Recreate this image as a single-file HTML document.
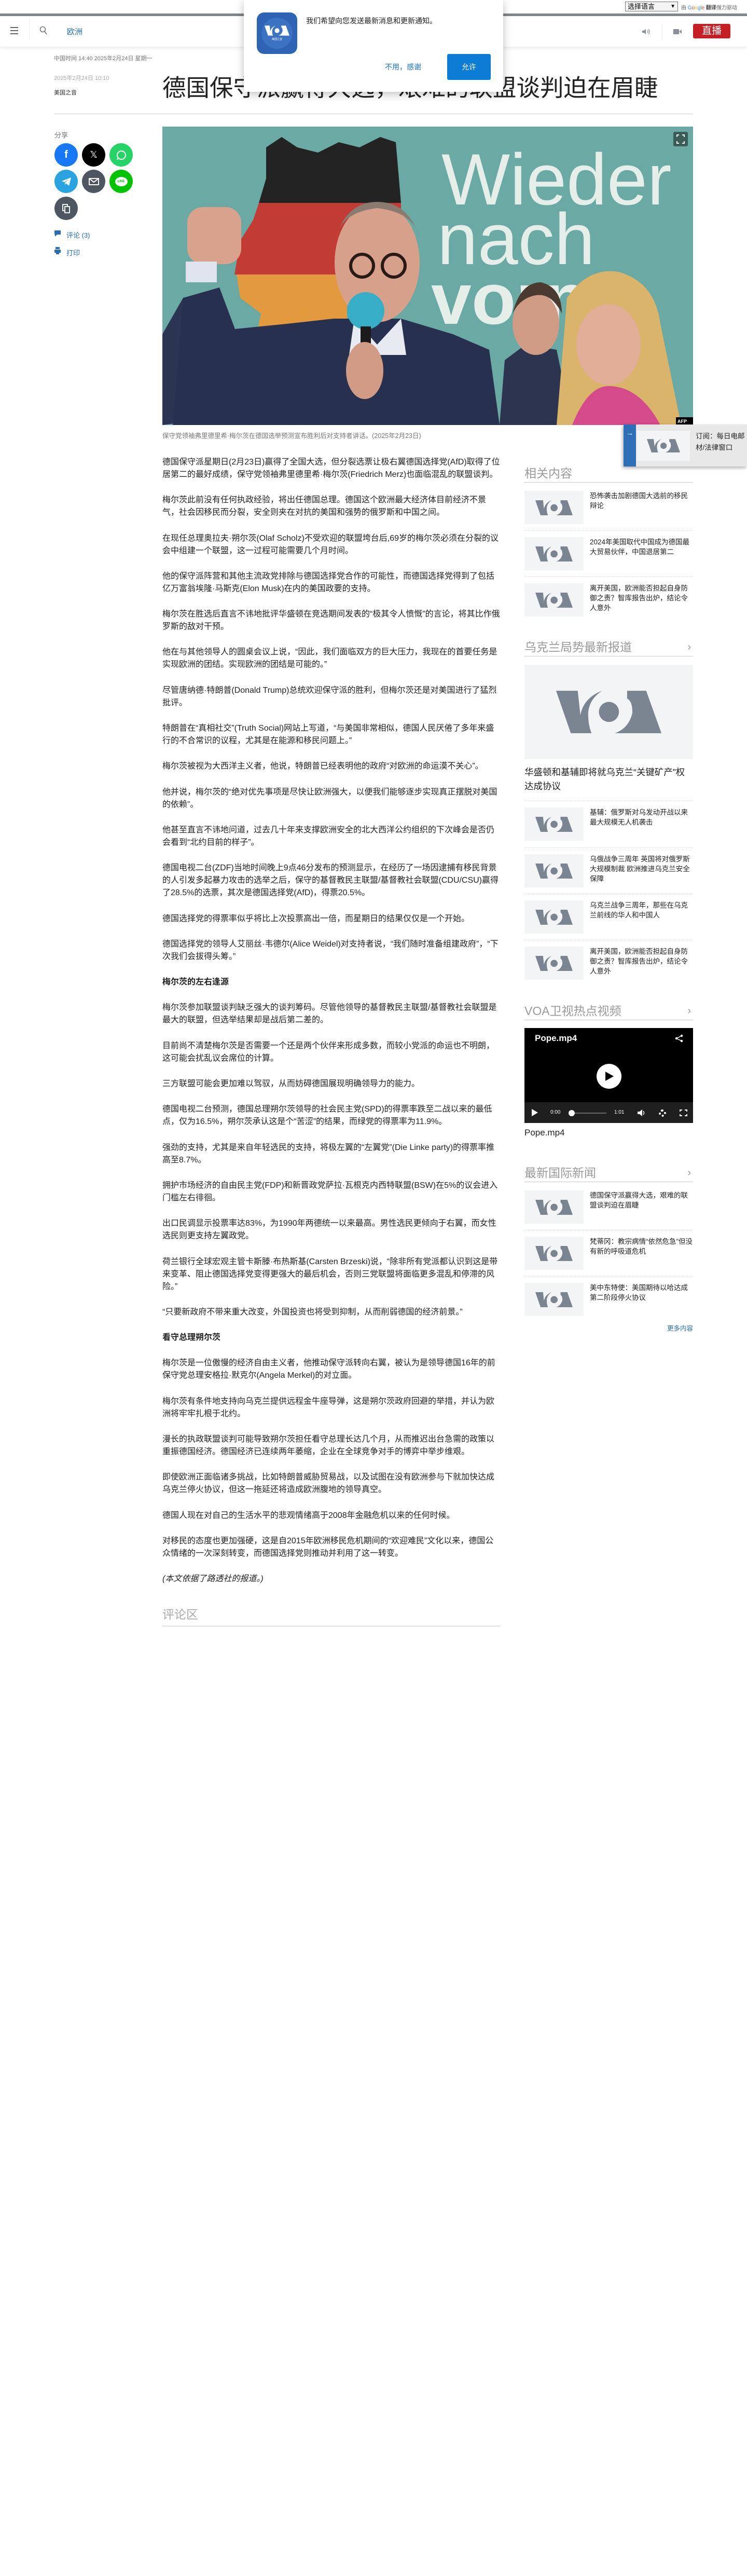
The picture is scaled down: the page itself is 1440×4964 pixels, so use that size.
<!DOCTYPE html>
<html lang="zh-CN"><head><meta charset="utf-8">
<style>
*{margin:0;padding:0;box-sizing:border-box}
html,body{width:1440px;height:4964px;background:#fff;overflow:hidden}
body{font-family:"Liberation Sans","Noto Sans CJK SC",sans-serif;color:#222;position:relative}
.abs{position:absolute}
.body{position:absolute;left:313px;top:879px;width:652px;font-size:16px;line-height:24px;color:#222}
.body p{margin:0 0 25.3px 0}
.body h3{font-size:16px;font-weight:bold;margin:0 0 25.3px 0;line-height:24px}
.sh{position:absolute;left:1011px;width:325px;font-size:23px;color:#9a9a9a;border-bottom:1px solid #ccc;padding-bottom:2px;line-height:30px}
.sh .ar{position:absolute;right:4px;top:0;font-size:20px;color:#999}
.item{position:absolute;left:1011px;width:325px;height:66px}
.item .th{position:absolute;left:0;top:0;width:114px;height:64px;background:#f2f4f6;display:flex;align-items:center;justify-content:center}
.item .tx{position:absolute;left:126px;top:0;width:199px;font-size:13.5px;line-height:19px;color:#222}
.sep{position:absolute;left:1011px;width:325px;border-top:1px dotted #ddd}
.circ{position:absolute;width:45px;height:45px;border-radius:50%;display:flex;align-items:center;justify-content:center}
</style></head><body>

<div class="abs" style="left:1205px;top:3px;width:102px;height:19px;border:1px solid #777;background:#f4f4f4;font-size:13px;line-height:17px;padding-left:4px;color:#000">选择语言<span style="position:absolute;right:4px;top:0;font-size:10px">&#9660;</span></div>
<div class="abs" style="left:1313px;top:6px;font-size:10px;color:#666;white-space:nowrap">由 <span style="color:#4285f4">G</span><span style="color:#ea4335">o</span><span style="color:#fbbc05">o</span><span style="color:#4285f4">g</span><span style="color:#34a853">l</span><span style="color:#ea4335">e</span> <b style="color:#444">翻译</b>强力驱动</div>
<div class="abs" style="left:0;top:26px;width:1440px;height:5px;background:#80868b"></div>
<div class="abs" style="left:0;top:31px;width:1440px;height:59px;background:#fff;box-shadow:0 3px 6px rgba(0,0,0,.08)"></div>
<div class="abs" style="left:20px;top:52px;width:15px;height:2px;background:#666;box-shadow:0 6px 0 #666,0 12px 0 #666"></div>
<div class="abs" style="left:56px;top:36px;width:1px;height:40px;background:#eee"></div>
<svg class="abs" style="left:76px;top:50px" width="16" height="18" viewBox="0 0 16 18"><circle cx="6.5" cy="6.5" r="5" fill="none" stroke="#777" stroke-width="1.6"/><line x1="10" y1="10.5" x2="14" y2="16" stroke="#777" stroke-width="1.8"/></svg>
<div class="abs" style="left:129px;top:50px;font-size:15px;color:#2a6db0">欧洲</div>
<svg class="abs" style="left:1237px;top:54px" width="17" height="14" viewBox="0 0 17 14"><path d="M1 5h3l4-3v10l-4-3H1z" fill="#8a9099"/><path d="M11 4q2 3 0 6M13 2q4 5 0 10" fill="none" stroke="#8a9099" stroke-width="1.2"/></svg>
<div class="abs" style="left:1276px;top:46px;width:1px;height:30px;background:#eee"></div>
<svg class="abs" style="left:1298px;top:55px" width="16" height="12" viewBox="0 0 16 12"><rect x="0" y="1" width="11" height="10" fill="#8a9099"/><path d="M11 6l5-4v8z" fill="#8a9099"/></svg>
<div class="abs" style="left:1336px;top:46px;width:72px;height:28px;background:#c41f24;border-radius:3px;color:#fff;font-size:19px;text-align:center;line-height:28px">直播</div>

<div class="abs" style="left:104px;top:104px;font-size:11px;color:#777">中国时间 14:40 2025年2月24日 星期一</div>
<div class="abs" style="left:104px;top:142px;font-size:11px;color:#aaa">2025年2月24日 10:10</div>
<div class="abs" style="left:104px;top:170px;font-size:11px;color:#333">美国之音</div>
<div class="abs" style="left:313px;top:140px;font-size:45.5px;line-height:60px;color:#222;white-space:nowrap">德国保守派赢得大选，艰难的联盟谈判迫在眉睫</div>
<div class="abs" style="left:104px;top:219px;width:1232px;height:1px;background:#ccc"></div>

<div class="abs" style="left:105px;top:250px;font-size:13px;color:#777">分享</div>
<div class="circ" style="left:105px;top:276px;background:#1877f2"><span style="color:#fff;font-weight:bold;font-size:20px">f</span></div>
<div class="circ" style="left:158px;top:276px;background:#000"><span style="color:#fff;font-size:18px">𝕏</span></div>
<div class="circ" style="left:211px;top:276px;background:#25d366"><svg width="22" height="22" viewBox="0 0 22 22"><circle cx="11" cy="11" r="8" fill="none" stroke="#fff" stroke-width="2"/><path d="M3 20l2-5" stroke="#fff" stroke-width="2"/></svg></div>
<div class="circ" style="left:105px;top:327px;background:#2aa3e0"><svg width="20" height="18" viewBox="0 0 20 18"><path d="M1 8L19 1 15 17 9 12 7 16 7 11 15 4 6 10z" fill="#fff"/></svg></div>
<div class="circ" style="left:158px;top:327px;background:#4d5661"><svg width="20" height="14" viewBox="0 0 20 14"><rect x="1" y="1" width="18" height="12" fill="none" stroke="#fff" stroke-width="2"/><path d="M1 1l9 7 9-7" fill="none" stroke="#fff" stroke-width="2"/></svg></div>
<div class="circ" style="left:211px;top:327px;background:#00c300"><div style="width:24px;height:18px;background:#fff;border-radius:50%;font-size:6px;color:#00c300;text-align:center;line-height:18px;font-weight:bold">LINE</div></div>
<div class="circ" style="left:105px;top:379px;background:#4d5661"><svg width="16" height="18" viewBox="0 0 16 18"><rect x="1" y="1" width="9" height="12" fill="none" stroke="#fff" stroke-width="1.8"/><rect x="5" y="5" width="9" height="12" fill="#4d5661" stroke="#fff" stroke-width="1.8"/></svg></div>
<svg class="abs" style="left:105px;top:444px" width="12" height="13" viewBox="0 0 12 13"><path d="M0 0h12v8H5l-4 4V8H0z" fill="#2a6db0"/></svg>
<div class="abs" style="left:128px;top:443px;font-size:13px;color:#2a6db0">评论 (3)</div>
<svg class="abs" style="left:105px;top:476px" width="12" height="14" viewBox="0 0 12 14"><rect x="2" y="0" width="8" height="4" fill="#2a6db0"/><rect x="0" y="5" width="12" height="6" fill="#2a6db0"/><rect x="3" y="9" width="6" height="5" fill="#2a6db0"/></svg>
<div class="abs" style="left:128px;top:477px;font-size:13px;color:#2a6db0">打印</div>

<svg class="abs" style="left:313px;top:244px" width="1023" height="575" viewBox="0 0 1023 575">
<rect width="1023" height="575" fill="#6ba9a4"/>
<path d="M200 40 L230 20 L260 40 L300 50 L340 30 L380 40 L420 20 L450 30 L460 147 L186 147 L200 100 Z" fill="#232323"/>
<path d="M186 147 H460 V285 H139 L150 220 L175 180 Z" fill="#c23b35"/>
<path d="M143 285 H356 V411 H180 L190 360 L150 330 Z" fill="#e39a3e"/>
<text x="538" y="150" font-family="Liberation Sans" font-size="140" fill="#e6eeea">Wieder</text>
<text x="530" y="265" font-family="Liberation Sans" font-size="140" fill="#e6eeea">nach</text>
<text x="518" y="380" font-family="Liberation Sans" font-size="140" fill="#e6eeea" font-weight="bold">vorn</text>
<path d="M0 400 L40 330 L100 320 L120 560 L0 575Z" fill="#2b3552"/>
<path d="M20 575 L40 330 L110 310 L140 390 L240 380 L330 370 L460 370 L560 400 L630 430 L650 575Z" fill="#27314f"/>
<rect x="48" y="155" width="104" height="110" rx="30" fill="#d9a28c"/>
<rect x="45" y="260" width="60" height="40" fill="#dfe4ee"/>
<ellipse cx="414" cy="262" rx="82" ry="115" fill="#d6a08a"/>
<path d="M334 215 Q355 145 414 145 Q475 145 496 215 Q485 165 414 157 Q345 165 334 215Z" fill="#8a7a70"/>
<circle cx="385" cy="268" r="22" fill="none" stroke="#2a1a16" stroke-width="6"/>
<circle cx="446" cy="268" r="22" fill="none" stroke="#2a1a16" stroke-width="6"/>
<path d="M370 370 L414 420 L460 370 L470 440 L360 440Z" fill="#e8eaf2"/>
<circle cx="392" cy="355" r="36" fill="#38aec6"/>
<rect x="382" y="385" width="20" height="130" fill="#1b1b1b"/>
<ellipse cx="390" cy="470" rx="36" ry="55" fill="#d19b86"/>
<path d="M650 575 L660 450 L700 420 L760 430 L790 575Z" fill="#2d3450"/>
<ellipse cx="720" cy="380" rx="45" ry="60" fill="#cf9b84"/>
<path d="M675 360 Q690 300 730 300 Q770 310 770 360 Q750 320 720 325 Q690 330 675 360Z" fill="#4a3a30"/>
<path d="M760 575 L780 330 Q820 270 880 280 Q950 300 960 380 L1000 575Z" fill="#d9b46a"/>
<ellipse cx="860" cy="420" rx="62" ry="78" fill="#e0ad96"/>
<path d="M790 575 Q820 500 860 500 Q920 500 960 575Z" fill="#d44a8a"/>
<rect x="990" y="560" width="33" height="15" fill="#000"/>
<text x="993" y="571" font-family="Liberation Sans" font-size="9" font-weight="bold" fill="#fff">AFP</text>
<rect x="985" y="10" width="28" height="28" rx="3" fill="rgba(0,0,0,.45)"/>
<path d="M992 20v-4h4M1006 20v-4h-4M992 28v4h4M1006 28v4h-4" stroke="#fff" stroke-width="2" fill="none"/>
</svg>
<div class="abs" style="left:313px;top:829px;font-size:12.5px;color:#777;white-space:nowrap">保守党领袖弗里德里希·梅尔茨在德国选举预测宣布胜利后对支持者讲话。(2025年2月23日)</div>

<div class="body">
<p>德国保守派星期日(2月23日)赢得了全国大选，但分裂选票让极右翼德国选择党(AfD)取得了位居第二的最好成绩，保守党领袖弗里德里希·梅尔茨(Friedrich Merz)也面临混乱的联盟谈判。</p>
<p>梅尔茨此前没有任何执政经验，将出任德国总理。德国这个欧洲最大经济体目前经济不景气，社会因移民而分裂，安全则夹在对抗的美国和强势的俄罗斯和中国之间。</p>
<p>在现任总理奥拉夫·朔尔茨(Olaf Scholz)不受欢迎的联盟垮台后,69岁的梅尔茨必须在分裂的议会中组建一个联盟，这一过程可能需要几个月时间。</p>
<p>他的保守派阵营和其他主流政党排除与德国选择党合作的可能性，而德国选择党得到了包括亿万富翁埃隆·马斯克(Elon Musk)在内的美国政要的支持。</p>
<p>梅尔茨在胜选后直言不讳地批评华盛顿在竞选期间发表的“极其令人愤慨”的言论，将其比作俄罗斯的敌对干预。</p>
<p>他在与其他领导人的圆桌会议上说，“因此，我们面临双方的巨大压力，我现在的首要任务是实现欧洲的团结。实现欧洲的团结是可能的。”</p>
<p>尽管唐纳德·特朗普(Donald Trump)总统欢迎保守派的胜利，但梅尔茨还是对美国进行了猛烈批评。</p>
<p>特朗普在“真相社交”(Truth Social)网站上写道，“与美国非常相似，德国人民厌倦了多年来盛行的不合常识的议程，尤其是在能源和移民问题上。”</p>
<p>梅尔茨被视为大西洋主义者，他说，特朗普已经表明他的政府“对欧洲的命运漠不关心”。</p>
<p>他并说，梅尔茨的“绝对优先事项是尽快让欧洲强大，以便我们能够逐步实现真正摆脱对美国的依赖”。</p>
<p>他甚至直言不讳地问道，过去几十年来支撑欧洲安全的北大西洋公约组织的下次峰会是否仍会看到“北约目前的样子”。</p>
<p>德国电视二台(ZDF)当地时间晚上9点46分发布的预测显示，在经历了一场因逮捕有移民背景的人引发多起暴力攻击的选举之后，保守的基督教民主联盟/基督教社会联盟(CDU/CSU)赢得了28.5%的选票，其次是德国选择党(AfD)，得票20.5%。</p>
<p>德国选择党的得票率似乎将比上次投票高出一倍，而星期日的结果仅仅是一个开始。</p>
<p>德国选择党的领导人艾丽丝·韦德尔(Alice Weidel)对支持者说，“我们随时准备组建政府”，“下次我们会拔得头筹。”</p>
<h3>梅尔茨的左右逢源</h3>
<p>梅尔茨参加联盟谈判缺乏强大的谈判筹码。尽管他领导的基督教民主联盟/基督教社会联盟是最大的联盟，但选举结果却是战后第二差的。</p>
<p>目前尚不清楚梅尔茨是否需要一个还是两个伙伴来形成多数，而较小党派的命运也不明朗，这可能会扰乱议会席位的计算。</p>
<p>三方联盟可能会更加难以驾驭，从而妨碍德国展现明确领导力的能力。</p>
<p>德国电视二台预测，德国总理朔尔茨领导的社会民主党(SPD)的得票率跌至二战以来的最低点，仅为16.5%，朔尔茨承认这是个“苦涩”的结果，而绿党的得票率为11.9%。</p>
<p>强劲的支持，尤其是来自年轻选民的支持，将极左翼的“左翼党”(Die Linke party)的得票率推高至8.7%。</p>
<p>拥护市场经济的自由民主党(FDP)和新晋政党萨拉·瓦根克内西特联盟(BSW)在5%的议会进入门槛左右徘徊。</p>
<p>出口民调显示投票率达83%，为1990年两德统一以来最高。男性选民更倾向于右翼，而女性选民则更支持左翼政党。</p>
<p>荷兰银行全球宏观主管卡斯滕·布热斯基(Carsten Brzeski)说，“除非所有党派都认识到这是带来变革、阻止德国选择党变得更强大的最后机会，否则三党联盟将面临更多混乱和停滞的风险。”</p>
<p>“只要新政府不带来重大改变，外国投资也将受到抑制，从而削弱德国的经济前景。”</p>
<h3>看守总理朔尔茨</h3>
<p>梅尔茨是一位傲慢的经济自由主义者，他推动保守派转向右翼，被认为是领导德国16年的前保守党总理安格拉·默克尔(Angela Merkel)的对立面。</p>
<p>梅尔茨有条件地支持向乌克兰提供远程金牛座导弹，这是朔尔茨政府回避的举措，并认为欧洲将牢牢扎根于北约。</p>
<p>漫长的执政联盟谈判可能导致朔尔茨担任看守总理长达几个月，从而推迟出台急需的政策以重振德国经济。德国经济已连续两年萎缩，企业在全球竞争对手的博弈中举步维艰。</p>
<p>即使欧洲正面临诸多挑战，比如特朗普威胁贸易战，以及试图在没有欧洲参与下就加快达成乌克兰停火协议，但这一拖延还将造成欧洲腹地的领导真空。</p>
<p>德国人现在对自己的生活水平的悲观情绪高于2008年金融危机以来的任何时候。</p>
<p>对移民的态度也更加强硬，这是自2015年欧洲移民危机期间的“欢迎难民”文化以来，德国公众情绪的一次深刻转变，而德国选择党则推动并利用了这一转变。</p>
<p><i>(本文依据了路透社的报道。)</i></p>
</div>
<div class="abs" style="left:313px;top:3095px;width:652px;font-size:23px;color:#aaa;border-bottom:1px solid #ccc;padding-bottom:6px;line-height:32px">评论区</div>

<div class="sh" style="top:897px">相关内容</div>
<div class="item" style="top:946px"><div class="th"><svg width="72" height="29" viewBox="0 0 608 245"><path d="M0 0H125L140 140Q160 40 265 0Q190 50 185 130Q185 200 205 245H85Z" fill="#7a8591"/><circle cx="305" cy="122" r="58" fill="#7a8591"/><path d="M410 0H520L608 245H340Q420 215 440 130Q442 60 410 45Z" fill="#7a8591"/></svg></div><div class="tx">恐怖袭击加剧德国大选前的移民辩论</div></div>
<div class="sep" style="top:1022px"></div>
<div class="item" style="top:1035px"><div class="th"><svg width="72" height="29" viewBox="0 0 608 245"><path d="M0 0H125L140 140Q160 40 265 0Q190 50 185 130Q185 200 205 245H85Z" fill="#7a8591"/><circle cx="305" cy="122" r="58" fill="#7a8591"/><path d="M410 0H520L608 245H340Q420 215 440 130Q442 60 410 45Z" fill="#7a8591"/></svg></div><div class="tx">2024年美国取代中国成为德国最大贸易伙伴，中国退居第二</div></div>
<div class="sep" style="top:1111px"></div>
<div class="item" style="top:1124px"><div class="th"><svg width="72" height="29" viewBox="0 0 608 245"><path d="M0 0H125L140 140Q160 40 265 0Q190 50 185 130Q185 200 205 245H85Z" fill="#7a8591"/><circle cx="305" cy="122" r="58" fill="#7a8591"/><path d="M410 0H520L608 245H340Q420 215 440 130Q442 60 410 45Z" fill="#7a8591"/></svg></div><div class="tx">离开美国，欧洲能否担起自身防御之责？智库报告出炉，结论令人意外</div></div>

<div class="sh" style="top:1232px">乌克兰局势最新报道<span class="ar">&#x203A;</span></div>
<div class="abs" style="left:1011px;top:1281px;width:325px;height:182px;background:#f2f4f6;display:flex;align-items:center;justify-content:center"><svg width="203" height="82" viewBox="0 0 608 245"><path d="M0 0H125L140 140Q160 40 265 0Q190 50 185 130Q185 200 205 245H85Z" fill="#7a8591"/><circle cx="305" cy="122" r="58" fill="#7a8591"/><path d="M410 0H520L608 245H340Q420 215 440 130Q442 60 410 45Z" fill="#7a8591"/></svg></div>
<div class="abs" style="left:1011px;top:1475px;width:325px;font-size:17.5px;line-height:27px;color:#222">华盛顿和基辅即将就乌克兰“关键矿产”权达成协议</div>
<div class="sep" style="top:1543px"></div>
<div class="item" style="top:1556px"><div class="th"><svg width="72" height="29" viewBox="0 0 608 245"><path d="M0 0H125L140 140Q160 40 265 0Q190 50 185 130Q185 200 205 245H85Z" fill="#7a8591"/><circle cx="305" cy="122" r="58" fill="#7a8591"/><path d="M410 0H520L608 245H340Q420 215 440 130Q442 60 410 45Z" fill="#7a8591"/></svg></div><div class="tx">基辅：俄罗斯对乌发动开战以来最大规模无人机袭击</div></div>
<div class="sep" style="top:1633px"></div>
<div class="item" style="top:1646px"><div class="th"><svg width="72" height="29" viewBox="0 0 608 245"><path d="M0 0H125L140 140Q160 40 265 0Q190 50 185 130Q185 200 205 245H85Z" fill="#7a8591"/><circle cx="305" cy="122" r="58" fill="#7a8591"/><path d="M410 0H520L608 245H340Q420 215 440 130Q442 60 410 45Z" fill="#7a8591"/></svg></div><div class="tx">乌俄战争三周年 英国将对俄罗斯大规模制裁 欧洲推进乌克兰安全保障</div></div>
<div class="sep" style="top:1722px"></div>
<div class="item" style="top:1735px"><div class="th"><svg width="72" height="29" viewBox="0 0 608 245"><path d="M0 0H125L140 140Q160 40 265 0Q190 50 185 130Q185 200 205 245H85Z" fill="#7a8591"/><circle cx="305" cy="122" r="58" fill="#7a8591"/><path d="M410 0H520L608 245H340Q420 215 440 130Q442 60 410 45Z" fill="#7a8591"/></svg></div><div class="tx">乌克兰战争三周年，那些在乌克兰前线的华人和中国人</div></div>
<div class="sep" style="top:1811px"></div>
<div class="item" style="top:1824px"><div class="th"><svg width="72" height="29" viewBox="0 0 608 245"><path d="M0 0H125L140 140Q160 40 265 0Q190 50 185 130Q185 200 205 245H85Z" fill="#7a8591"/><circle cx="305" cy="122" r="58" fill="#7a8591"/><path d="M410 0H520L608 245H340Q420 215 440 130Q442 60 410 45Z" fill="#7a8591"/></svg></div><div class="tx">离开美国，欧洲能否担起自身防御之责？智库报告出炉，结论令人意外</div></div>

<div class="sh" style="top:1933px">VOA卫视热点视频<span class="ar">&#x203A;</span></div>
<div class="abs" style="left:1011px;top:1981px;width:325px;height:183px;background:#000">
 <div class="abs" style="left:20px;top:10px;color:#fff;font-size:17px;font-weight:bold">Pope.mp4</div>
 <svg class="abs" style="left:290px;top:12px" width="16" height="16" viewBox="0 0 16 16"><circle cx="13" cy="3" r="2.2" fill="#fff"/><circle cx="3" cy="8" r="2.2" fill="#fff"/><circle cx="13" cy="13" r="2.2" fill="#fff"/><path d="M13 3L3 8 13 13" stroke="#fff" stroke-width="1.5" fill="none"/></svg>
 <div class="abs" style="left:139px;top:69px;width:48px;height:48px;border-radius:50%;background:#fff"></div>
 <svg class="abs" style="left:156px;top:84px" width="16" height="18" viewBox="0 0 16 18"><path d="M0 0L16 9 0 18Z" fill="#000"/></svg>
 <div class="abs" style="left:0;top:143px;width:325px;height:40px;background:#1f1f1f"></div>
 <svg class="abs" style="left:14px;top:156px" width="12" height="14" viewBox="0 0 12 14"><path d="M0 0L12 7 0 14Z" fill="#fff"/></svg>
 <div class="abs" style="left:50px;top:157px;color:#fff;font-size:10px">0:00</div>
 <div class="abs" style="left:90px;top:163px;width:68px;height:2px;background:#666"></div>
 <div class="abs" style="left:85px;top:158px;width:12px;height:12px;border-radius:50%;background:#fff"></div>
 <div class="abs" style="left:173px;top:157px;color:#fff;font-size:10px">1:01</div>
 <svg class="abs" style="left:218px;top:157px" width="16" height="13" viewBox="0 0 16 13"><path d="M0 4h4l5-4v13L4 9H0z" fill="#fff"/><path d="M11 3q3 3.5 0 7" stroke="#fff" stroke-width="1.5" fill="none"/></svg>
 <div class="abs" style="left:259px;top:157px;width:14px;height:14px;border-radius:50%;border:4px dotted #fff"></div>
 <svg class="abs" style="left:299px;top:157px" width="15" height="13" viewBox="0 0 15 13"><path d="M1 4V1h4M10 1h4v3M1 9v3h4M10 12h4V9" stroke="#fff" stroke-width="2" fill="none"/></svg>
</div>
<div class="abs" style="left:1011px;top:2173px;font-size:17px;color:#222">Pope.mp4</div>

<div class="sh" style="top:2245px">最新国际新闻<span class="ar">&#x203A;</span></div>
<div class="item" style="top:2294px"><div class="th"><svg width="72" height="29" viewBox="0 0 608 245"><path d="M0 0H125L140 140Q160 40 265 0Q190 50 185 130Q185 200 205 245H85Z" fill="#7a8591"/><circle cx="305" cy="122" r="58" fill="#7a8591"/><path d="M410 0H520L608 245H340Q420 215 440 130Q442 60 410 45Z" fill="#7a8591"/></svg></div><div class="tx">德国保守派赢得大选，艰难的联盟谈判迫在眉睫</div></div>
<div class="sep" style="top:2370px"></div>
<div class="item" style="top:2383px"><div class="th"><svg width="72" height="29" viewBox="0 0 608 245"><path d="M0 0H125L140 140Q160 40 265 0Q190 50 185 130Q185 200 205 245H85Z" fill="#7a8591"/><circle cx="305" cy="122" r="58" fill="#7a8591"/><path d="M410 0H520L608 245H340Q420 215 440 130Q442 60 410 45Z" fill="#7a8591"/></svg></div><div class="tx">梵蒂冈：教宗病情“依然危急”但没有新的呼吸道危机</div></div>
<div class="sep" style="top:2459px"></div>
<div class="item" style="top:2472px"><div class="th"><svg width="72" height="29" viewBox="0 0 608 245"><path d="M0 0H125L140 140Q160 40 265 0Q190 50 185 130Q185 200 205 245H85Z" fill="#7a8591"/><circle cx="305" cy="122" r="58" fill="#7a8591"/><path d="M410 0H520L608 245H340Q420 215 440 130Q442 60 410 45Z" fill="#7a8591"/></svg></div><div class="tx">美中东特使：美国期待以哈达成第二阶段停火协议</div></div>
<div class="abs" style="left:1236px;top:2549px;width:100px;text-align:right;font-size:12.5px;color:#2a6db0">更多内容</div>

<div class="abs" style="left:1202px;top:818px;width:238px;height:81px;background:#e8e8e8;box-shadow:-2px 3px 6px rgba(0,0,0,.3)">
 <div class="abs" style="left:0;top:0;width:24px;height:81px;background:#2f6fb8"></div>
 <div class="abs" style="left:5px;top:8px;color:#fff;font-size:14px">&#x2192;</div>
 <div class="abs" style="left:26px;top:12px;width:102px;height:58px;background:#f2f4f6;display:flex;align-items:center;justify-content:center"><svg width="64" height="26" viewBox="0 0 608 245"><path d="M0 0H125L140 140Q160 40 265 0Q190 50 185 130Q185 200 205 245H85Z" fill="#7a8591"/><circle cx="305" cy="122" r="58" fill="#7a8591"/><path d="M410 0H520L608 245H340Q420 215 440 130Q442 60 410 45Z" fill="#7a8591"/></svg></div>
 <div class="abs" style="left:139px;top:12px;width:110px;font-size:13.5px;line-height:22px;color:#222;white-space:nowrap;overflow:hidden">订阅：每日电邮<br>材/法律窗口</div>
</div>

<div class="abs" style="left:470px;top:0;width:500px;height:177px;background:#fff;box-shadow:0 4px 16px rgba(0,0,0,.25)">
 <div class="abs" style="left:25px;top:24px;width:78px;height:80px;border-radius:14px;background:#2f64b4;display:flex;align-items:center;justify-content:center;flex-direction:column">
  <div style="width:60px;height:60px;border-radius:50%;background:#3b72c2;display:flex;align-items:center;justify-content:center;flex-direction:column"><svg width="48" height="20" viewBox="0 0 608 245"><path d="M0 0H125L140 140Q160 40 265 0Q190 50 185 130Q185 200 205 245H85Z" fill="#fff"/><circle cx="305" cy="122" r="58" fill="#fff"/><path d="M410 0H520L608 245H340Q420 215 440 130Q442 60 410 45Z" fill="#fff"/></svg><div style="color:#fff;font-size:5px;margin-top:3px">美国之音</div></div>
 </div>
 <div class="abs" style="left:120px;top:30px;font-size:14px;color:#222">我们希望向您发送最新消息和更新通知。</div>
 <div class="abs" style="left:272px;top:119px;font-size:14px;color:#1a73c8">不用，感谢</div>
 <div class="abs" style="left:392px;top:104px;width:84px;height:50px;background:#0c7cd5;border-radius:3px;color:#fff;font-size:14px;text-align:center;line-height:50px">允许</div>
</div>
</body></html>
